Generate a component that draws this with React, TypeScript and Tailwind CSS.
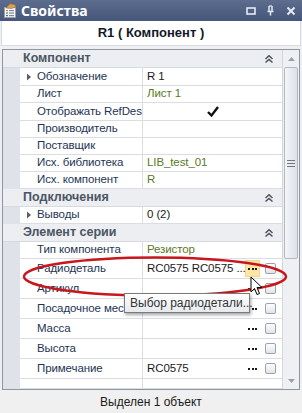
import React from "react";

const font = { fontFamily: '"Liberation Sans", Arial, sans-serif' };

function Chevrons() {
  return (
    <svg width="10" height="10" viewBox="0 0 10 10" className="mr-[8px]">
      <path d="M1.5 5 L5 1.8 L8.5 5" fill="none" stroke="#4a4f58" strokeWidth="1.4" />
      <path d="M1.5 8.6 L5 5.4 L8.5 8.6" fill="none" stroke="#4a4f58" strokeWidth="1.4" />
    </svg>
  );
}

function Category({ title }: { title: string }) {
  return (
    <div className="h-[18px] flex items-center bg-[#eceef2] border-b border-[#d5d9e0]">
      <span className="pl-[20px] flex-1 text-[12.5px] font-bold text-[#4b5563]">{title}</span>
      <Chevrons />
    </div>
  );
}

function Dots({ hi }: { hi?: boolean }) {
  return (
    <div
      className={
        "w-[15px] h-[17px] flex items-center justify-center gap-[1.5px] " +
        (hi ? "bg-[#fde7a6] border border-[#f3d588]" : "")
      }
    >
      <span className="w-[2px] h-[2px] bg-[#1a1a1a]" />
      <span className="w-[2px] h-[2px] bg-[#1a1a1a]" />
      <span className="w-[2px] h-[2px] bg-[#1a1a1a]" />
    </div>
  );
}

function Check() {
  return (
    <div className="w-[11px] h-[11px] rounded-[2px] border border-[#9aa3ae] bg-gradient-to-b from-[#fdfdfd] to-[#e2e4e8]" />
  );
}

function Row({
  name,
  value,
  green,
  arrow,
  h = 17,
  extra,
  hi,
  children,
}: {
  name: string;
  value?: string;
  green?: boolean;
  arrow?: boolean;
  h?: number;
  extra?: boolean;
  hi?: boolean;
  children?: React.ReactNode;
}) {
  return (
    <div className="flex" style={{ height: h }}>
      <div className="w-[17px] shrink-0 bg-[#dfe2e8]" />
      <div className="w-[123px] shrink-0 flex items-center border-b border-r border-[#dadde3] bg-white relative overflow-hidden whitespace-nowrap">
        {arrow && (
          <svg width="6" height="8" viewBox="0 0 6 8" className="absolute left-[6px]">
            <path d="M1 0.5 L5 4 L1 7.5 Z" fill="#5a5f66" />
          </svg>
        )}
        <span className="pl-[17px] text-[11.5px] tracking-[-0.1px] text-[#1d3553]">{name}</span>
      </div>
      <div className="flex-1 min-w-0 flex items-center border-b border-[#dadde3] bg-white pl-[4px] whitespace-nowrap">
        {children ?? (
          <span
            className={
              "flex-1 min-w-0 overflow-hidden text-[11.5px] tracking-[-0.1px] " +
              (green ? "text-[#5b7a26]" : "text-[#1a1a1a]")
            }
          >
            {value}
          </span>
        )}
        {extra && (
          <div className="flex items-center gap-[5px] pr-[6px] shrink-0">
            <Dots hi={hi} />
            <Check />
          </div>
        )}
      </div>
    </div>
  );
}

export default function App() {
  return (
    <div className="w-[302px] h-[413px] bg-[#edeff2] flex flex-col relative overflow-hidden" style={font}>
      {/* Title bar */}
      <div className="h-[21px] flex items-center bg-gradient-to-b from-[#5c6d8e] to-[#46567a] pl-[3px]">
        <svg width="15" height="15" viewBox="0 0 15 15">
          <rect x="1.5" y="4.5" width="11" height="10" fill="#f6f6f6" stroke="#9aa0aa" />
          <rect x="3" y="7" width="2" height="1.2" fill="#e07b2a" />
          <rect x="6" y="7" width="5" height="1.2" fill="#7a8aa6" />
          <rect x="3" y="9.5" width="2" height="1.2" fill="#4a9a3a" />
          <rect x="6" y="9.5" width="5" height="1.2" fill="#7a8aa6" />
          <rect x="3" y="12" width="2" height="1.2" fill="#3a6ac0" />
          <rect x="6" y="12" width="5" height="1.2" fill="#7a8aa6" />
          <path d="M3 5 L7 0.8 L11.5 1.5 L13 4 L8.5 5.5 Z" fill="#d9a05a" stroke="#9c6a34" strokeWidth="0.6" />
        </svg>
        <span className="ml-[3px] text-[14px] font-bold text-white" style={{ fontFamily: '"Noto Sans", sans-serif' }}>
          Свойства
        </span>
        <div className="flex-1" />
        <svg width="10" height="8" viewBox="0 0 10 8" className="mr-[10px]">
          <rect x="1" y="1" width="8" height="6" fill="none" stroke="#e6eaf2" strokeWidth="1.6" />
        </svg>
        <svg width="9" height="11" viewBox="0 0 9 11" className="mr-[11px]">
          <path d="M3 1 V6 M6 1 V6 M1.5 6.5 H7.5 M4.5 6.5 V10.5" fill="none" stroke="#e6eaf2" strokeWidth="1.5" />
          <path d="M3 1 H6" stroke="#e6eaf2" strokeWidth="1.2" />
        </svg>
        <svg width="10" height="10" viewBox="0 0 10 10" className="mr-[6px]">
          <path d="M1.5 1.5 L8.5 8.5 M8.5 1.5 L1.5 8.5" stroke="#e6eaf2" strokeWidth="2" />
        </svg>
      </div>

      {/* Header */}
      <div className="h-[25px] mx-[1px] bg-white border-x border-b border-[#d8dce2] flex items-center justify-center">
        <span className="text-[13px] font-bold text-[#111827]">R1 ( Компонент )</span>
      </div>

      <div className="h-[3px]" />

      {/* Grid */}
      <div className="mx-[2px] h-[341px] border border-[#8f96a1] flex bg-white">
        <div className="flex-1 min-w-0 flex flex-col overflow-hidden">
          <Category title="Компонент" />
          <Row name="Обозначение" value="R 1" arrow h={18} />
          <Row name="Лист" value="Лист 1" green />
          <Row name="Отображать RefDes" h={18}>
            <div className="flex-1 flex justify-center pr-[4px]">
              <svg width="14" height="13" viewBox="0 0 14 13">
                <path d="M2 7 L5.5 10.5 L12 2" fill="none" stroke="#111" strokeWidth="2.4" />
              </svg>
            </div>
          </Row>
          <Row name="Производитель" />
          <Row name="Поставщик" />
          <Row name="Исх. библиотека" value="LIB_test_01" green />
          <Row name="Исх. компонент" value="R" green />
          <Category title="Подключения" />
          <Row name="Выводы" value="0 (2)" arrow />
          <Category title="Элемент серии" />
          <Row name="Тип компонента" value="Резистор" green />
          <Row name="Радиодеталь" value="RC0575 RC0575 ..." h={21} extra hi />
          <Row name="Артикул" h={21} extra />
          <Row name="Посадочное место" h={21} extra />
          <Row name="Масса" h={21} extra />
          <Row name="Высота" h={21} extra />
          <Row name="Примечание" value="RC0575" h={21} extra />
          <Row name="" h={10} />
        </div>
        {/* Scrollbar */}
        <div className="w-[17px] shrink-0 bg-[#eef0f3] border-l border-[#d3d7dd] flex flex-col items-center">
          <div className="h-[17px] flex items-center justify-center">
            <svg width="7" height="4" viewBox="0 0 7 4">
              <path d="M0 4 L3.5 0 L7 4 Z" fill="#9aa1ab" />
            </svg>
          </div>
          <div className="w-[14px] h-[192px] rounded-[2px] border border-[#b3b9c3] bg-gradient-to-r from-[#f4f5f7] to-[#dde1e6] flex items-center justify-center">
            <div className="flex flex-col gap-[2px]">
              <span className="w-[8px] h-[1px] bg-[#6f7783]" />
              <span className="w-[8px] h-[1px] bg-[#6f7783]" />
              <span className="w-[8px] h-[1px] bg-[#6f7783]" />
            </div>
          </div>
          <div className="flex-1" />
          <div className="h-[17px] flex items-center justify-center">
            <svg width="7" height="4" viewBox="0 0 7 4">
              <path d="M0 0 L3.5 4 L7 0 Z" fill="#9aa1ab" />
            </svg>
          </div>
        </div>
      </div>

      {/* Status */}
      <div className="flex-1 flex items-center justify-center bg-[#f0f0f0]">
        <span className="text-[12px] text-[#1a1a1a]">Выделен 1 объект</span>
      </div>

      {/* Red ellipse overlay */}
      <svg width="302" height="413" className="absolute left-0 top-0 pointer-events-none">
        <ellipse cx="155" cy="276.5" rx="131" ry="19" fill="none" stroke="#c8161d" strokeWidth="2.5" />
      </svg>

      {/* Tooltip */}
      <div className="absolute left-[124px] top-[293px] w-[126px] h-[20px] border border-[#7a7a7a] bg-gradient-to-b from-[#ffffff] to-[#e6e9ee] shadow-[1px_2px_3px_rgba(0,0,0,0.35)] flex items-center pl-[5px]">
        <span className="text-[12px] text-[#333] whitespace-nowrap">Выбор радиодетали...</span>
      </div>

      {/* Cursor */}
      <svg width="14" height="20" viewBox="0 0 14 20" className="absolute left-[250px] top-[276px]">
        <path d="M1 1 L1 16 L4.5 12.5 L7 18.5 L9.5 17.5 L7 11.5 L12 11.5 Z" fill="#fff" stroke="#000" strokeWidth="1" strokeLinejoin="round" />
      </svg>
    </div>
  );
}
